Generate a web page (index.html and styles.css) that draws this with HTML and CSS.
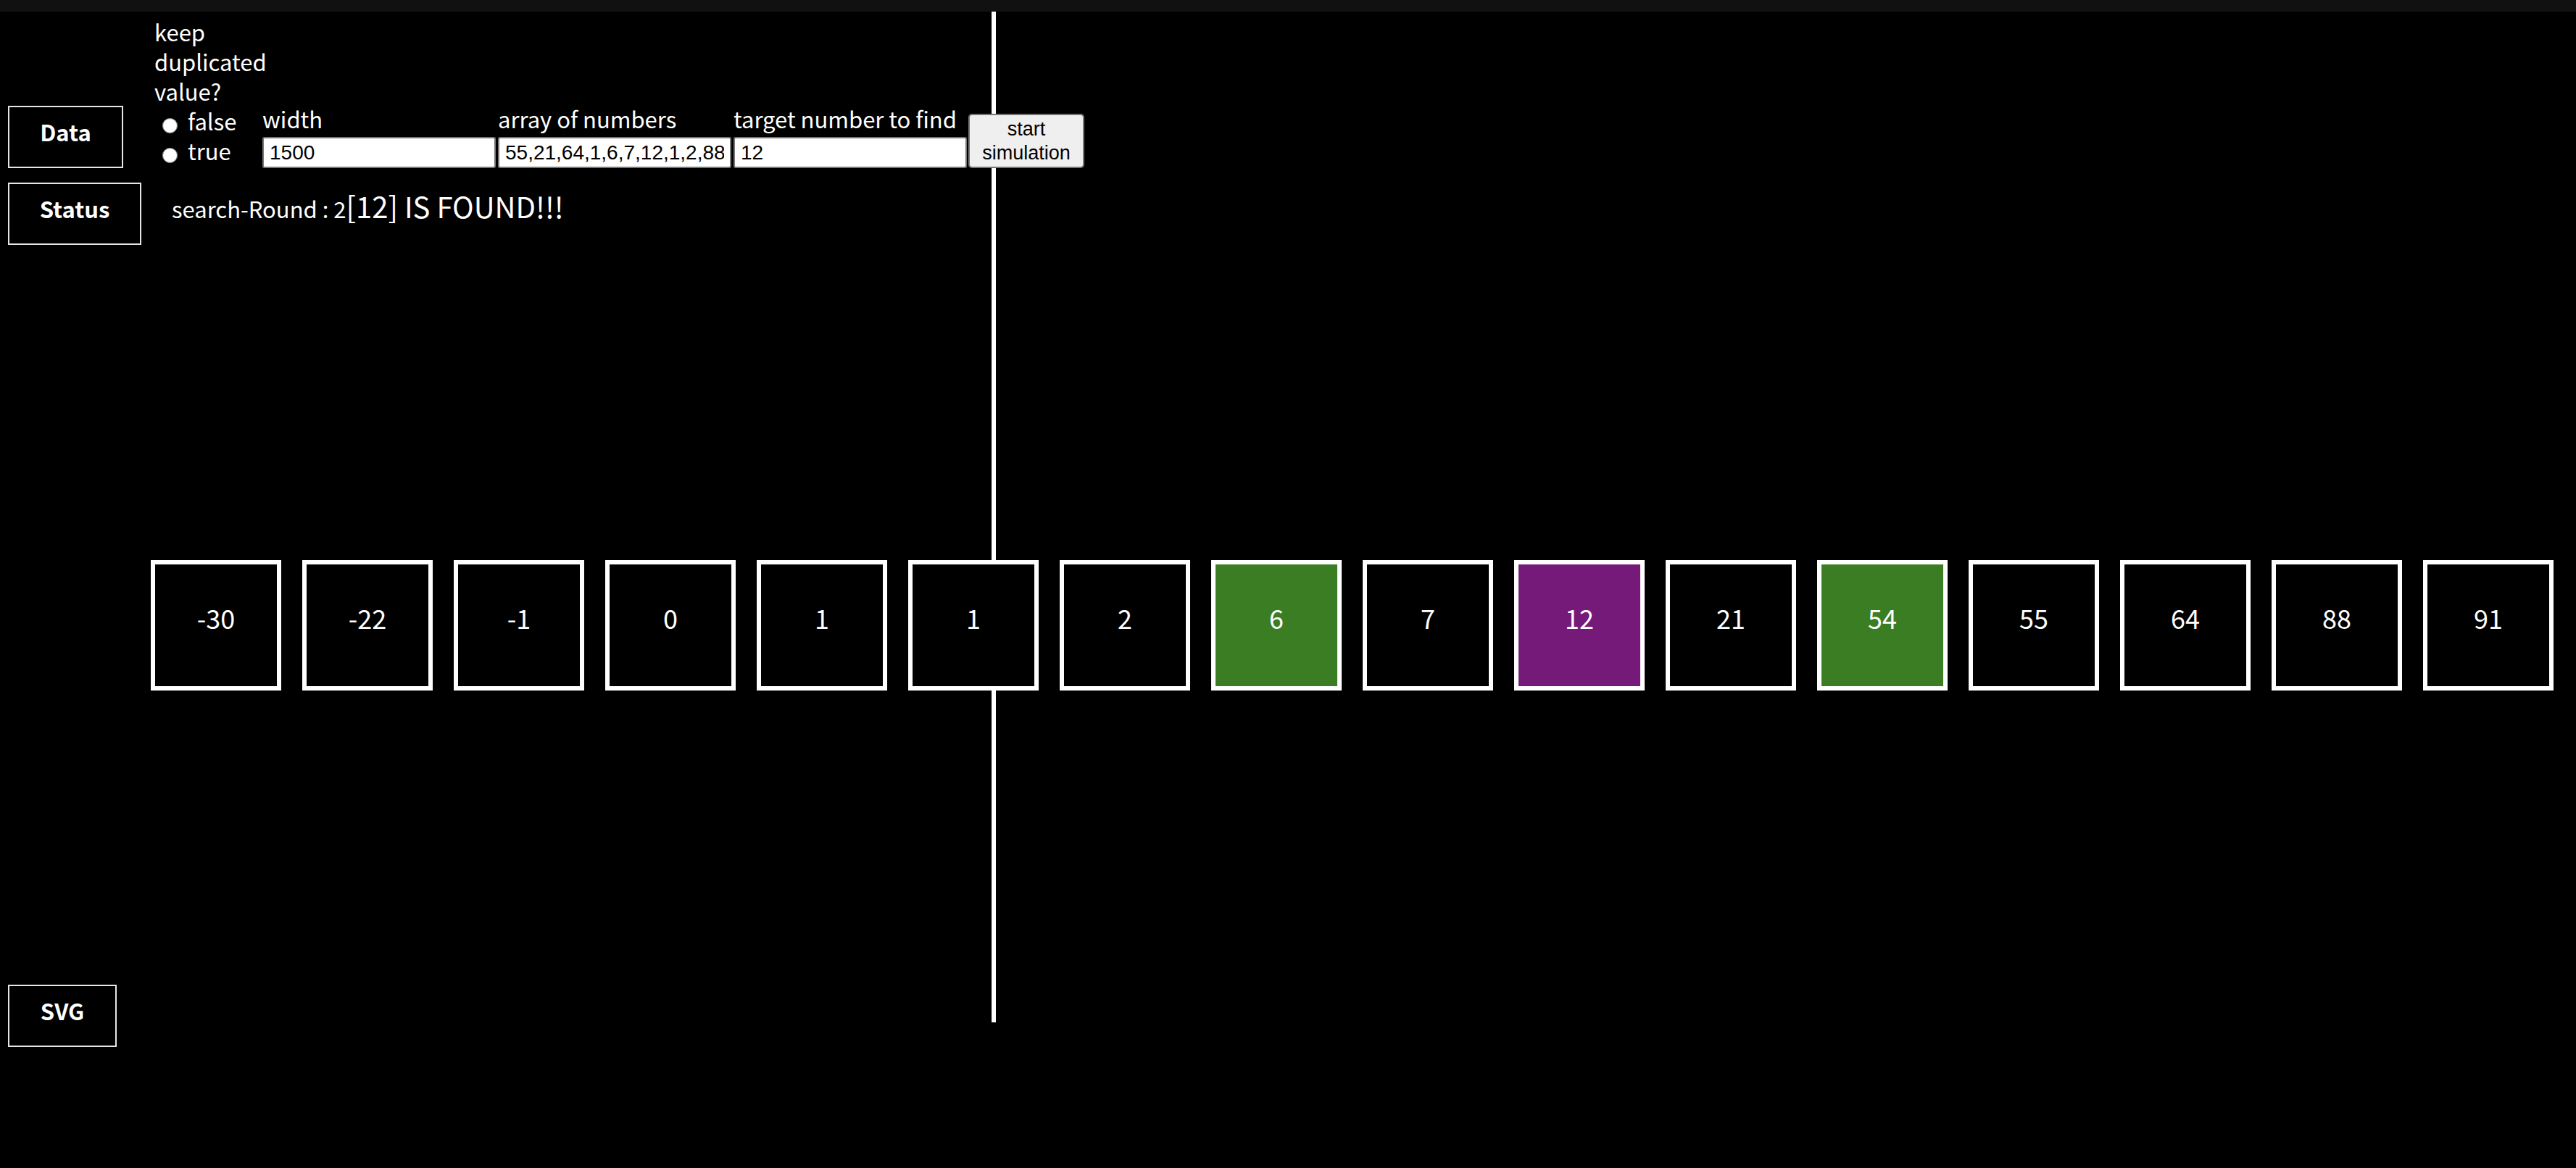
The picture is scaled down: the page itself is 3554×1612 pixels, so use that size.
FILE: index.html
```html
<!DOCTYPE html>
<html>
<head>
    <meta charset="UTF-8">
    <title>Binary search simulation</title>
    <link rel="stylesheet" href="styles.css">
</head>
<body>
    <div class="topbar"></div>
    <div class="guide"></div>
    <main class="page">
        <section class="row dataRow">
            <div class="tag tagData">Data</div>
            <div class="dup">
                <div class="dupTitle">keep duplicated value?</div>
                <label class="opt"><input type="radio" name="dup" value="false">false</label>
                <label class="opt"><input type="radio" name="dup" value="true">true</label>
            </div>
            <label class="field">
                <span class="fieldName">width</span>
                <input type="text" id="width" value="1500">
            </label>
            <label class="field">
                <span class="fieldName">array of numbers</span>
                <input type="text" id="numbers" value="55,21,64,1,6,7,12,1,2,88">
            </label>
            <label class="field">
                <span class="fieldName">target number to find</span>
                <input type="text" id="target" value="12">
            </label>
            <button id="start">start<br>simulation</button>
        </section>

        <section class="row statusRow">
            <div class="tag tagStatus">Status</div>
            <p class="status">search-Round : 2<span class="found">[12] IS FOUND!!!</span></p>
        </section>

        <section class="cells">
            <div class="cell">-30</div>
            <div class="cell">-22</div>
            <div class="cell">-1</div>
            <div class="cell">0</div>
            <div class="cell">1</div>
            <div class="cell">1</div>
            <div class="cell">2</div>
            <div class="cell bound">6</div>
            <div class="cell">7</div>
            <div class="cell hit">12</div>
            <div class="cell">21</div>
            <div class="cell bound">54</div>
            <div class="cell">55</div>
            <div class="cell">64</div>
            <div class="cell">88</div>
            <div class="cell">91</div>
        </section>

        <section class="row">
            <div class="tag tagSvg">SVG</div>
        </section>
    </main>
</body>
</html>
```

FILE: styles.css
```css
html {
    background-color: #000;
}
body {
    margin: 0;
    color: #fff;
    font-family: "Noto Sans CJK KR", "Noto Sans", sans-serif;
    font-size: 31px;
    line-height: 41px;
}
.topbar {
    height: 16px;
    background-color: #111;
}
.guide {
    position: absolute;
    left: 1368px;
    top: 16px;
    width: 6px;
    height: 1395px;
    background-color: #fff;
    z-index: -1;
}
.page {
    padding: 7px 11px 0 11px;
}
.row {
    display: flex;
}
.dataRow {
    align-items: flex-end;
}
.tag {
    box-sizing: border-box;
    border: 2px solid #e6e6e6;
    padding: 13px 0 27px 0;
    line-height: 42px;
    font-weight: bold;
    text-align: center;
    flex-shrink: 0;
}
.tagData {
    width: 159px;
}
.tagStatus {
    width: 184px;
}
.tagSvg {
    width: 150px;
}
.dup {
    align-self: flex-start;
    width: 149px;
    margin-left: 43px;
    padding-bottom: 4px;
}
.opt {
    display: block;
    white-space: nowrap;
}
.opt input {
    width: 21px;
    height: 21px;
    margin: 0 14px 0 11px;
    vertical-align: -4px;
}
.field {
    display: flex;
    flex-direction: column;
    margin-right: 3px;
}
.fieldName {
    margin-bottom: 5px;
    white-space: nowrap;
}
.field input {
    box-sizing: border-box;
    width: 322px;
    height: 43px;
    margin: 0;
    padding: 0 8px;
    border: 2px solid #767676;
    border-radius: 3px;
    background-color: #fff;
    color: #000;
    font-family: "Liberation Sans", Arial, sans-serif;
    font-size: 28px;
}
#start {
    box-sizing: border-box;
    width: 160px;
    height: 75px;
    margin-left: -1px;
    padding: 0;
    border: 2px solid #767676;
    border-radius: 5px;
    background-color: #efefef;
    color: #000;
    font-family: "Liberation Sans", Arial, sans-serif;
    font-size: 27px;
    line-height: 33px;
}
.statusRow {
    margin-top: 20px;
    align-items: baseline;
}
.status {
    margin: 0 0 0 42px;
}
.found {
    font-size: 40px;
}
.cells {
    display: flex;
    gap: 29px;
    margin: 435px 0 406px 197px;
    font-size: 36px;
}
.cell {
    box-sizing: border-box;
    width: 180px;
    height: 180px;
    border: 6px solid #fff;
    padding-bottom: 22px;
    background-color: #000;
    display: flex;
    align-items: center;
    justify-content: center;
}
.bound {
    background-color: #3a7d23;
}
.hit {
    background-color: #751a79;
}
```
